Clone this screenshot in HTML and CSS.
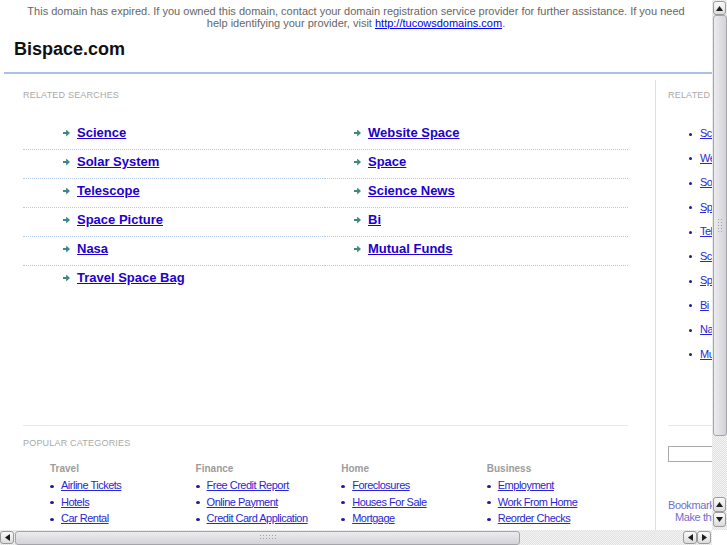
FILE: index.html
```html
<!DOCTYPE html>
<html lang="en">
<head>
    <meta charset="UTF-8">
    <meta name="viewport" content="width=device-width, initial-scale=1.0">
    <title>Bispace.com</title>
    <link rel="stylesheet" href="styles.css">
</head>
<body>
    <div class="page">
        <div class="notice">This domain has expired. If you owned this domain, contact your domain registration service provider for further assistance. If you need help identifying your provider, visit <a href="#">http://tucowsdomains.com</a>.</div>
        <div class="header"><h1>Bispace.com</h1></div>

        <div class="main">
            <div class="primary">
                <div class="searches">
                    <h2>RELATED SEARCHES</h2>
                    <div class="links">
                        <ul class="col-left">
                            <li><a href="#">Science</a></li>
                            <li><a href="#">Solar System</a></li>
                            <li><a href="#">Telescope</a></li>
                            <li><a href="#">Space Picture</a></li>
                            <li><a href="#">Nasa</a></li>
                            <li><a href="#">Travel Space Bag</a></li>
                        </ul>
                        <ul class="col-right">
                            <li><a href="#">Website Space</a></li>
                            <li><a href="#">Space</a></li>
                            <li><a href="#">Science News</a></li>
                            <li><a href="#">Bi</a></li>
                            <li><a href="#">Mutual Funds</a></li>
                        </ul>
                    </div>
                </div>

                <div class="popular">
                    <h2>POPULAR CATEGORIES</h2>
                    <div class="cats">
                        <div>
                            <h3>Travel</h3>
                            <ul>
                                <li><a href="#">Airline Tickets</a></li>
                                <li><a href="#">Hotels</a></li>
                                <li><a href="#">Car Rental</a></li>
                            </ul>
                        </div>
                        <div>
                            <h3>Finance</h3>
                            <ul>
                                <li><a href="#">Free Credit Report</a></li>
                                <li><a href="#">Online Payment</a></li>
                                <li><a href="#">Credit Card Application</a></li>
                            </ul>
                        </div>
                        <div>
                            <h3>Home</h3>
                            <ul>
                                <li><a href="#">Foreclosures</a></li>
                                <li><a href="#">Houses For Sale</a></li>
                                <li><a href="#">Mortgage</a></li>
                            </ul>
                        </div>
                        <div>
                            <h3>Business</h3>
                            <ul>
                                <li><a href="#">Employment</a></li>
                                <li><a href="#">Work From Home</a></li>
                                <li><a href="#">Reorder Checks</a></li>
                            </ul>
                        </div>
                    </div>
                </div>
            </div>

            <div class="side">
                <div class="side-links">
                    <h2>RELATED SEARCHES</h2>
                    <ul>
                        <li><a href="#">Science</a></li>
                        <li><a href="#">Website Space</a></li>
                        <li><a href="#">Solar System</a></li>
                        <li><a href="#">Space</a></li>
                        <li><a href="#">Telescope</a></li>
                        <li><a href="#">Science News</a></li>
                        <li><a href="#">Space Picture</a></li>
                        <li><a href="#">Bi</a></li>
                        <li><a href="#">Nasa</a></li>
                        <li><a href="#">Mutual Funds</a></li>
                    </ul>
                </div>
                <div class="side-tools">
                    <input type="text">
                    <div class="bookmark">
                        <div>Bookmark this page</div>
                        <div class="make">Make this your homepage</div>
                    </div>
                </div>
            </div>
        </div>
    </div>

    <!-- window scrollbars -->
    <div class="vbar">
        <div class="sb-btn"><svg width="7" height="5" viewBox="0 0 7 5"><path d="M0 5L3.5 0L7 5z" fill="#1e1e1e"/></svg></div>
        <div class="vthumb"><div class="grip-v"></div></div>
        <div class="spacer"></div>
        <div class="sb-btn tall"><svg width="7" height="5" viewBox="0 0 7 5"><path d="M0 5L3.5 0L7 5z" fill="#1e1e1e"/></svg></div>
        <div class="sb-btn tall"><svg width="7" height="5" viewBox="0 0 7 5"><path d="M0 0L3.5 5L7 0z" fill="#1e1e1e"/></svg></div>
    </div>
    <div class="hbar">
        <div class="sb-btn wide"><svg width="5" height="7" viewBox="0 0 5 7"><path d="M5 0L0 3.5L5 7z" fill="#1e1e1e"/></svg></div>
        <div class="hthumb"><div class="grip-h"></div></div>
        <div class="spacer"></div>
        <div class="sb-btn wide"><svg width="5" height="7" viewBox="0 0 5 7"><path d="M5 0L0 3.5L5 7z" fill="#1e1e1e"/></svg></div>
        <div class="sb-btn wide"><svg width="5" height="7" viewBox="0 0 5 7"><path d="M0 0L5 3.5L0 7z" fill="#1e1e1e"/></svg></div>
    </div>
    <div class="corner"></div>
</body>
</html>
```

FILE: styles.css
```css
html, body {
    margin: 0;
    overflow: hidden;
}
body {
    font-family: "Liberation Sans", Arial, sans-serif;
    color: #333;
    background: #fff;
}
a {
    text-decoration: underline;
}
ul {
    list-style: none;
    margin: 0;
    padding: 0;
}
h2 {
    margin: 0;
    font-size: 9px;
    line-height: 11px;
    font-weight: normal;
    color: #a9a9a9;
    letter-spacing: .2px;
}
.page {
    width: 900px;
}

/* expired notice + title */
.notice {
    width: 672px;
    margin: 0 20px;
    padding-top: 5px;
    font-size: 11px;
    line-height: 12px;
    color: #666;
    text-align: center;
}
.notice a {
    color: #0000ee;
}
.header {
    margin: 9px 0 0 4px;
    padding: 0 10px 12px;
    border-bottom: 2px solid #aac1e9;
}
.header h1 {
    margin: 0;
    font-size: 18px;
    line-height: 22px;
    color: #111;
}

.main {
    display: flex;
    margin-top: 6px;
}
.primary {
    flex: none;
    width: 605px;
    min-height: 470px;
    padding: 0 27px 0 23px;
    border-right: 1px solid #d5e0f3;
}

/* related searches */
.searches {
    height: 345px;
    box-sizing: border-box;
    padding-top: 10px;
}
.links {
    display: flex;
    margin-top: 20px;
}
.col-left {
    width: 302px;
}
.col-right {
    width: 303px;
}
.links li {
    display: flex;
    align-items: center;
    padding: 4px 0 8px 40px;
    line-height: 16px;
    font-size: 13px;
    font-weight: bold;
    border-bottom: 1px dotted #b2c8ee;
}
.links li::before {
    content: "";
    width: 7px;
    height: 7px;
    margin-right: 7px;
    background: #3b8a80;
    clip-path: polygon(0 35%, 45% 35%, 45% 0, 100% 50%, 45% 100%, 45% 65%, 0 65%);
}
.col-right li {
    padding-left: 29px;
}
.col-left li:last-child {
    border-bottom: none;
}
.links a {
    color: #2200cc;
}

/* popular categories */
.popular {
    border-top: 1px solid #e0e9f7;
    padding-top: 12px;
}
.cats {
    display: grid;
    grid-template-columns: repeat(4, 145.6px);
    padding-left: 27px;
    margin-top: 14px;
}
.cats h3 {
    margin: 0 0 2px;
    font-size: 10px;
    line-height: 12px;
    color: #9c9c9c;
}
.cats li {
    display: flex;
    align-items: center;
    line-height: 16.5px;
    font-size: 11px;
    letter-spacing: -.5px;
}
.cats li::before,
.side li::before {
    content: "";
    width: 4px;
    height: 3px;
    margin: 2px 7px 0 0;
    border-radius: 50%;
    background: #1f1a99;
}
.cats a,
.side a {
    color: #2a26d6;
}

/* right column */
.side {
    flex: none;
    width: 160px;
    padding-left: 12px;
}
.side-links {
    height: 345px;
    box-sizing: border-box;
    padding-top: 10px;
}
.side ul {
    margin-top: 20px;
    padding-left: 21px;
}
.side li {
    display: flex;
    align-items: center;
    line-height: 24.5px;
    font-size: 11px;
    letter-spacing: -.5px;
}
.side li::before {
    width: 3px;
    height: 3px;
    margin-right: 8px;
}
.side-tools {
    border-top: 1px solid #dde8f8;
    padding-top: 20px;
}
.side-tools input {
    display: block;
    width: 140px;
    height: 16px;
    box-sizing: border-box;
    margin: 0;
    border: 1px solid #aaa;
}
.bookmark {
    margin-top: 37px;
    font-size: 11px;
    line-height: 12px;
    letter-spacing: -.4px;
    color: #7070cc;
}
.bookmark .make {
    padding-left: 7px;
}

/* fake window scrollbars */
.vbar,
.hbar {
    position: fixed;
    display: flex;
    box-sizing: border-box;
    background: repeating-conic-gradient(#e2e2e2 0 25%, #f3f3f3 0 50%) 0 0 / 2px 2px;
}
.vbar {
    top: 0;
    right: 0;
    width: 15px;
    height: 530px;
    flex-direction: column;
    align-items: center;
    padding: 1px 0 3px;
}
.hbar {
    left: 0;
    bottom: 0;
    width: 712px;
    height: 15px;
    align-items: center;
    padding-right: 1px;
}
.spacer {
    flex: 1;
}
.sb-btn {
    flex: none;
    display: flex;
    align-items: center;
    justify-content: center;
    width: 13px;
    height: 14px;
    box-sizing: border-box;
    border: 1px solid #9a9a9a;
    border-radius: 3px;
    background: linear-gradient(#fbfbfb, #dcdcdc);
}
.sb-btn.tall {
    height: 15px;
}
.sb-btn.wide {
    width: 14px;
    height: 13px;
}
.vthumb,
.hthumb {
    flex: none;
    display: flex;
    align-items: center;
    justify-content: center;
    box-sizing: border-box;
    border: 1px solid #a4a4aa;
    border-radius: 3px;
}
.vthumb {
    width: 14px;
    height: 421px;
    margin-left: 1px;
    background: linear-gradient(to right, #ececef, #d3d3d8);
}
.hthumb {
    width: 505px;
    height: 14px;
    margin-left: 1px;
    background: linear-gradient(#ececef, #d3d3d8);
}
.grip-v,
.grip-h {
    background-image: radial-gradient(circle, #a2a2a2 0.7px, transparent 1px);
    background-size: 3px 3px;
}
.grip-v {
    width: 7px;
    height: 16px;
}
.grip-h {
    width: 18px;
    height: 7px;
}
.corner {
    position: fixed;
    right: 0;
    bottom: 0;
    width: 15px;
    height: 15px;
    background: #fff;
}
```
